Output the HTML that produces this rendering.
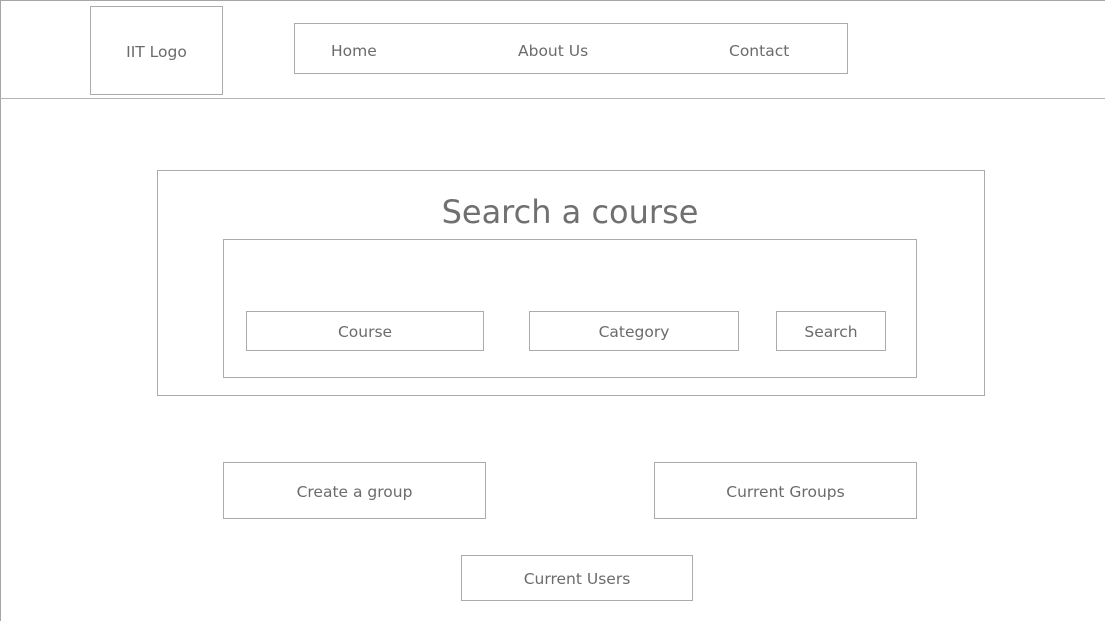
<!DOCTYPE html>
<html><head><meta charset="utf-8"><style>
html,body{margin:0;padding:0;background:#fff;}
body{width:1105px;height:621px;position:relative;overflow:hidden;font-family:"DejaVu Sans","Liberation Sans",sans-serif;color:#6b6b6b;}
.b{position:absolute;box-sizing:border-box;border:1px solid #ababab;display:flex;align-items:center;justify-content:center;font-size:15.5px;padding-top:2px;}
.t{position:absolute;font-size:15.5px;}
</style></head><body>
<div style="position:absolute;left:0;top:0;width:1105px;height:1px;background:#a6a6a6"></div>
<div style="position:absolute;left:0;top:0;width:1px;height:621px;background:#a6a6a6"></div>
<div style="position:absolute;left:0;top:98px;width:1105px;height:1px;background:#b5b5b5"></div>
<div class="b" style="left:90px;top:6px;width:133px;height:89px">IIT Logo</div>
<div class="b" style="left:294px;top:23px;width:554px;height:51px"></div>
<div class="t" style="left:331px;top:42px">Home</div>
<div class="t" style="left:518px;top:42px">About Us</div>
<div class="t" style="left:729px;top:42px">Contact</div>
<div class="b" style="left:157px;top:170px;width:828px;height:226px"></div>
<div class="t" style="left:0;width:1140px;text-align:center;top:193px;font-size:32px;color:#707070">Search a course</div>
<div class="b" style="left:223px;top:239px;width:694px;height:139px"></div>
<div class="b" style="left:246px;top:311px;width:238px;height:40px">Course</div>
<div class="b" style="left:529px;top:311px;width:210px;height:40px">Category</div>
<div class="b" style="left:776px;top:311px;width:110px;height:40px">Search</div>
<div class="b" style="left:223px;top:462px;width:263px;height:57px">Create a group</div>
<div class="b" style="left:654px;top:462px;width:263px;height:57px">Current Groups</div>
<div class="b" style="left:461px;top:555px;width:232px;height:46px">Current Users</div>
</body></html>
